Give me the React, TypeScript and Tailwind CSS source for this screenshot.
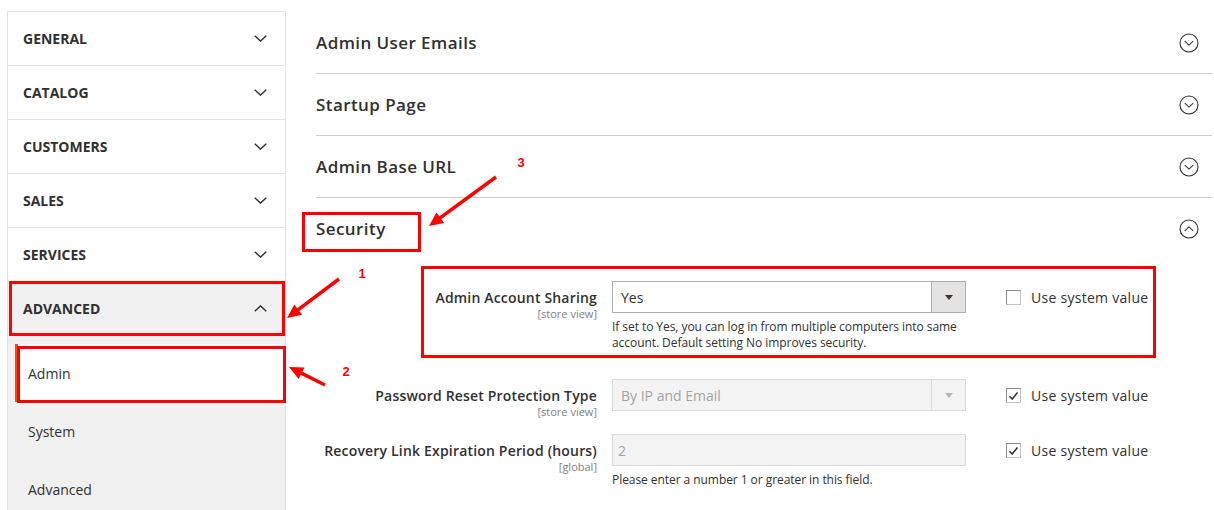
import React from 'react'

const ink = '#303030'

const groups = ['General', 'Catalog', 'Customers', 'Sales', 'Services']
const sections = ['Admin User Emails', 'Startup Page', 'Admin Base URL']

function SideChevron({ up }: { up?: boolean }) {
  return (
    <svg width="13" height="7" viewBox="0 0 13 7" fill="none">
      <path d={up ? 'M0.7 6.3 6.5 0.9l5.8 5.4' : 'M0.7 0.7 6.5 6.1l5.8-5.4'} stroke={ink} strokeWidth="1.4" />
    </svg>
  )
}

function CircleChevron({ up }: { up?: boolean }) {
  return (
    <svg width="20" height="20" viewBox="0 0 20 20" fill="none">
      <circle cx="10" cy="10" r="9" stroke={ink} strokeWidth="1.1" />
      <path d={up ? 'M5.8 11.8 10 7.9l4.2 3.9' : 'M5.8 8.2 10 12.1l4.2-3.9'} stroke={ink} strokeWidth="1.1" />
    </svg>
  )
}

function Checkbox({ checked }: { checked?: boolean }) {
  return (
    <span className="w-[15px] h-[15px] border border-[#c2c2c2] border-t-[#8a8a8a] border-l-[#8a8a8a] bg-white flex items-center justify-center">
      {checked && (
        <svg width="11" height="10" viewBox="0 0 11 10" fill="none">
          <path d="M1.5 5.2 4.2 8 9.5 1.5" stroke="#303030" strokeWidth="1.5" />
        </svg>
      )}
    </span>
  )
}

function SelectBox({ value, disabled }: { value: string; disabled?: boolean }) {
  return (
    <div
      className={
        disabled
          ? 'h-[32px] flex border border-[#dadada] bg-[#f3f3f3] text-[#a3a3a3]'
          : 'h-[32px] flex border border-[#adadad] bg-white text-[#303030]'
      }
    >
      <div className="flex-1 flex items-center pl-[8px] text-[14px]">{value}</div>
      <div
        className={
          disabled
            ? 'w-[34px] flex items-center justify-center border-l border-[#dadada]'
            : 'w-[34px] flex items-center justify-center border-l border-[#adadad] bg-[#e3e3e3]'
        }
      >
        <svg width="8" height="5" viewBox="0 0 8 5">
          <path d="M0 0h8L4 5z" fill={disabled ? '#b5b5b5' : '#41362f'} />
        </svg>
      </div>
    </div>
  )
}

function FieldRow({
  label,
  scope,
  note,
  checked,
  className,
  children,
}: {
  label: string
  scope: string
  note?: React.ReactNode
  checked?: boolean
  className?: string
  children: React.ReactNode
}) {
  return (
    <div className={`flex items-start ${className ?? ''}`}>
      <div className="w-[281px] text-right pt-[7px]">
        <div className="text-[14px] leading-[19px] font-semibold tracking-[0.013em] text-[#303030]">{label}</div>
        <div className="text-[11px] leading-[13px] text-[#808080]">[{scope}]</div>
      </div>
      <div className="w-[354px] ml-[15px]">
        {children}
        {note && <div className="mt-[6px] text-[12px] leading-[16px] tracking-[-0.005em] text-[#303030]">{note}</div>}
      </div>
      <div className="pl-[40px] pt-[7px] h-[26px] flex items-center gap-[10px] text-[14px] tracking-[0.02em] text-[#303030]">
        <Checkbox checked={checked} />
        <span>Use system value</span>
      </div>
    </div>
  )
}

function Arrow({ x1, y1, x2, y2 }: { x1: number; y1: number; x2: number; y2: number }) {
  const dx = x2 - x1
  const dy = y2 - y1
  const len = Math.hypot(dx, dy)
  const ux = dx / len
  const uy = dy / len
  const L = 14
  const W = 6.5
  const bx = x2 - ux * L
  const by = y2 - uy * L
  const px = -uy
  const py = ux
  const pts = `${x2},${y2} ${bx + px * W},${by + py * W} ${bx - px * W},${by - py * W}`
  return (
    <g>
      <line x1={x1} y1={y1} x2={bx + ux * 2} y2={by + uy * 2} stroke="#ff0000" strokeWidth="3.5" />
      <polygon points={pts} fill="#ff0000" />
    </g>
  )
}

function Annotations() {
  return (
    <div className="absolute inset-0 pointer-events-none">
      <div className="absolute left-[9px] top-[281px] w-[276px] h-[55px] border-[3px] border-[#ff0000]" />
      <div className="absolute left-[17px] top-[346px] w-[269px] h-[57px] border-[3px] border-[#ff0000]" />
      <div className="absolute left-[302px] top-[212px] w-[119px] h-[40px] border-[3px] border-[#ff0000]" />
      <div className="absolute left-[421px] top-[266px] w-[735px] h-[92px] border-[3px] border-[#ff0000]" />
      <svg className="absolute inset-0" width="1214" height="510" viewBox="0 0 1214 510">
        <Arrow x1={339} y1={279} x2={287} y2={318} />
        <Arrow x1={325} y1={385} x2={289} y2={367} />
        <Arrow x1={496} y1={177} x2={429} y2={226} />
        <g fill="#ff0000" fontFamily="'Liberation Sans', Arial, sans-serif" fontWeight="700" fontSize="13" textAnchor="middle">
          <text x="362" y="278">1</text>
          <text x="346" y="376">2</text>
          <text x="521" y="167">3</text>
        </g>
      </svg>
    </div>
  )
}

export default function App() {
  return (
    <div className="relative w-[1214px] h-[510px] overflow-hidden bg-white font-['Open_Sans',sans-serif] text-[#303030]">
      <div className="flex pl-[7px] h-full">
        <aside className="w-[279px] shrink-0 mt-[11px] border border-b-0 border-[#e3e3e3]">
          {groups.map((g) => (
            <div
              key={g}
              className="h-[54px] flex items-center justify-between pl-[15px] pr-[18px] border-b border-[#e3e3e3] text-[14px] font-bold uppercase"
            >
              <span>{g}</span>
              <SideChevron />
            </div>
          ))}
          <div className="h-[54px] flex items-center justify-between pl-[15px] pr-[18px] border-b border-[#f7f7f7] bg-[#f0f0f0] text-[14px] font-bold uppercase">
            <span>Advanced</span>
            <SideChevron up />
          </div>
          <div className="bg-[#f0f0f0] pl-[7px] pt-[8px] h-full">
            <div className="h-[58px] flex items-center bg-white border-l-[3px] border-[#eb5202] pl-[10px] text-[14px]">
              Admin
            </div>
            <div className="h-[58px] flex items-center pl-[13px] text-[14px]">System</div>
            <div className="h-[58px] flex items-center pl-[13px] text-[14px]">Advanced</div>
          </div>
        </aside>

        <main className="ml-[30px] mt-[12px] w-[896px]">
          {sections.map((s) => (
            <div key={s} className="h-[62px] flex items-center justify-between pr-[13px] border-b border-[#cccccc]">
              <span className="text-[17px] font-semibold tracking-[0.025em] text-[#303030]">{s}</span>
              <CircleChevron />
            </div>
          ))}
          <div className="h-[62px] flex items-center justify-between pr-[13px]">
            <span className="text-[17px] font-semibold tracking-[0.025em] text-[#303030]">Security</span>
            <CircleChevron up />
          </div>

          <div className="pt-[21px]">
            <FieldRow
              label="Admin Account Sharing"
              scope="store view"
              className="mb-[28px]"
              note={
                <>
                  If set to Yes, you can log in from multiple computers into same
                  <br />
                  account. Default setting No improves security.
                </>
              }
            >
              <SelectBox value="Yes" />
            </FieldRow>

            <FieldRow label="Password Reset Protection Type" scope="store view" checked className="mb-[16px]">
              <SelectBox value="By IP and Email" disabled />
            </FieldRow>

            <FieldRow
              label="Recovery Link Expiration Period (hours)"
              scope="global"
              checked
              note="Please enter a number 1 or greater in this field."
            >
              <div className="h-[32px] flex items-center pl-[5px] border border-[#dadada] bg-[#f3f3f3] text-[14px] text-[#a3a3a3]">
                2
              </div>
            </FieldRow>
          </div>
        </main>
      </div>
      <Annotations />
    </div>
  )
}
